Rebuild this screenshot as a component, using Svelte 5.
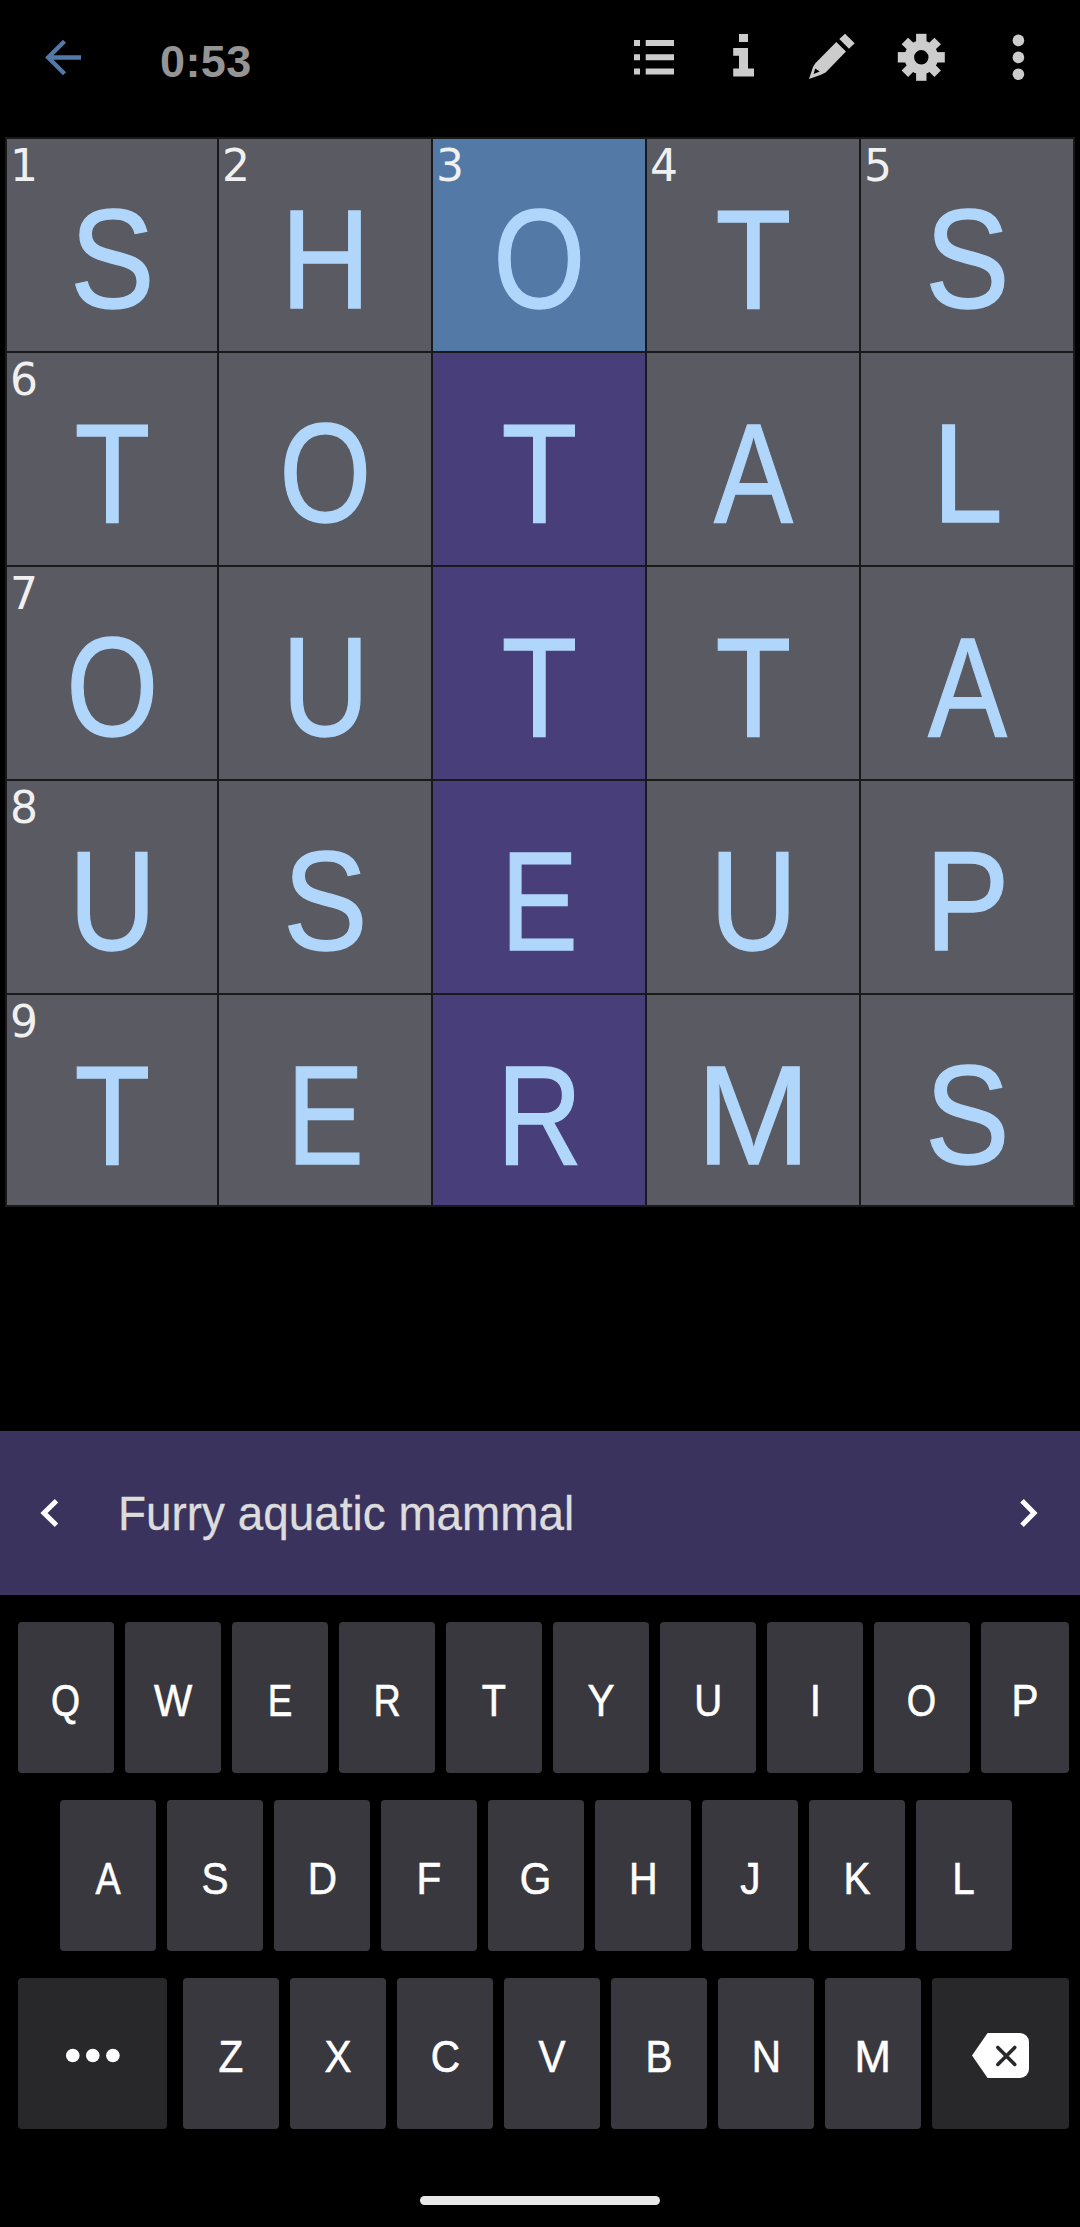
<script>
  const rows = ['SHOTS', 'TOTAL', 'OUTTA', 'USEUP', 'TERMS'];
  const numbers = { '0-0': 1, '0-1': 2, '0-2': 3, '0-3': 4, '0-4': 5, '1-0': 6, '2-0': 7, '3-0': 8, '4-0': 9 };
  const active = { row: 0, col: 2 };
  // Horizontal proportion of each capital
  const widths = { O: 0.84, Q: 0.83, U: 0.86, E: 0.82, R: 0.84, A: 0.84, T: 0.88, H: 0.88, M: 0.97 };
  const proportion = (letter) => widths[letter] ?? 0.9;
</script>

<main class="screen">
  <header class="bar">
    <button class="plain back" aria-label="Back">
      <svg width="37" height="37" viewBox="0 0 37 37"><path d="M36 18.5H3M19.5 2.2 3.2 18.5l16.3 16.3" fill="none" stroke="#5379a7" stroke-width="4.4" /></svg>
    </button>
    <span class="timer">0:53</span>
    <nav class="tools">
      <button class="plain" aria-label="Clues">
        <svg width="49" height="49" viewBox="0 0 49 49"><path d="M4 7h6v6H4zM4 21.3h6v6H4zM4 35.5h6v6H4zM15.7 7H44v6H15.7zM15.7 21.3H44v6H15.7zM15.7 35.5H44v6H15.7z" /></svg>
      </button>
      <button class="plain" aria-label="Info">
        <svg width="49" height="49" viewBox="0 0 49 49"><path d="M20 1h9v8h-9zM14.2 15H29v20.4h6v8H14.2v-8H20V22.7h-5.8z" /></svg>
      </button>
      <button class="plain" aria-label="Pencil">
        <svg width="49" height="49" viewBox="0 0 49 49"><path fill-rule="evenodd" d="M37 .7 46.7 10.3 41 15.7 31.3 6zM28.3 9 38 18.5 17.6 39.4 13 41.8 1 46 5 34 7.3 30.3zM7.2 35.4 5.6 40.9 11.7 38.5z" /></svg>
      </button>
      <button class="plain" aria-label="Settings">
        <svg width="49" height="49" viewBox="0 0 49 49">
          <g transform="translate(24.3 24.3)">
            <circle r="12" fill="none" stroke="#ccc" stroke-width="9.6" />
            {#each [0, 1, 2, 3, 4, 5, 6, 7] as tooth}
              <rect x={tooth % 2 ? -4.6 : -5.2} y={tooth % 2 ? -23.2 : -23.5} width={tooth % 2 ? 9.2 : 10.4} height="9.5" transform={`rotate(${tooth * 45})`} />
            {/each}
          </g>
        </svg>
      </button>
      <button class="plain" aria-label="More">
        <svg width="49" height="49" viewBox="0 0 49 49"><circle cx="24.4" cy="7.4" r="5.8" /><circle cx="24.4" cy="24.4" r="5.8" /><circle cx="24.4" cy="41.2" r="5.8" /></svg>
      </button>
    </nav>
  </header>

  <section class="board">
    {#each rows as row, r}
      {#each row.split('') as letter, c}
        <div class="cell" class:word={c === active.col} class:focus={r === active.row && c === active.col}>
          {#if numbers[`${r}-${c}`]}<span class="num">{numbers[`${r}-${c}`]}</span>{/if}
          <span class="letter" style:--w={proportion(letter)}>{letter}</span>
        </div>
      {/each}
    {/each}
  </section>

  <section class="clue">
    <button class="plain" aria-label="Previous clue">
      <svg width="19" height="30" viewBox="0 0 19 30"><path d="M16.5 2.8 4 15l12.5 12.2" fill="none" stroke="#fff" stroke-width="5" /></svg>
    </button>
    <p class="hint"><span>Furry aquatic mammal</span></p>
    <button class="plain" aria-label="Next clue">
      <svg width="19" height="30" viewBox="0 0 19 30"><path d="M3 2.8 15 15 3 27.2" fill="none" stroke="#fff" stroke-width="5" /></svg>
    </button>
  </section>

  <section class="keyboard">
    <div class="keys">
      {#each 'QWERTYUIOP'.split('') as key}<button class="key" class:last={key === 'P'}><span style:--w={proportion(key)}>{key}</span></button>{/each}
    </div>
    <div class="keys middle">
      {#each 'ASDFGHJKL'.split('') as key}<button class="key"><span style:--w={proportion(key)}>{key}</span></button>{/each}
    </div>
    <div class="keys">
      <button class="key special more" aria-label="More keys">
        <svg width="56" height="16" viewBox="0 0 56 16"><circle cx="7.8" cy="7.5" r="6.8" /><circle cx="27.8" cy="7.5" r="6.8" /><circle cx="47.9" cy="7.5" r="6.8" /></svg>
      </button>
      {#each 'ZXCVBNM'.split('') as key}<button class="key"><span style:--w={proportion(key)}>{key}</span></button>{/each}
      <button class="key special delete" aria-label="Delete">
        <svg width="57" height="45" viewBox="0 0 57 45"><path d="M0 22.5 15.6 0H48a9 9 0 0 1 9 9v27a9 9 0 0 1-9 9H15.6z" /><path d="m25.8 14.4 17 17m0-17-17 17" stroke="#28282a" stroke-width="3.6" stroke-linecap="round" /></svg>
      </button>
    </div>
  </section>

  <div class="home"></div>
</main>

<style>
  :global(body) { margin: 0; background: #000; }
  .screen {
    display: flex;
    flex-direction: column;
    width: 1080px;
    height: 2227px;
    overflow: hidden;
    background: #000;
    font-family: 'Liberation Sans', Arial, sans-serif;
  }
  svg { display: block; }
  button { border: 0; margin: 0; padding: 0; font: inherit; color: inherit; }
  .plain { display: flex; align-items: center; justify-content: center; background: none; }

  .bar { display: flex; align-items: center; height: 115px; margin-bottom: 22px; box-sizing: border-box; padding: 0 9px 0 45px; }
  .back { width: 37px; }
  .timer {
    margin-left: 78px;
    padding-top: 9px;
    color: #959595;
    font-size: 45px;
    font-weight: 700;
    line-height: 50px;
    letter-spacing: 0.4px;
  }
  .tools { display: grid; grid-template-columns: repeat(4, 89px) 105px; margin-left: auto; fill: #ccc; }

  .board {
    display: grid;
    grid-template-columns: 210px repeat(4, 212px);
    grid-template-rows: repeat(4, 212px) 210px;
    gap: 2px;
    width: 1066px;
    padding: 2px;
    margin-left: 5px;
    background: #19191b;
  }
  .cell { position: relative; min-width: 0; min-height: 0; background: #5a5a62; text-align: center; }
  .word { background: #483e79; }
  .focus { background: #5379a6; }
  .num {
    position: absolute;
    left: 3px;
    top: 0;
    color: #f0f0f0;
    font: 44px/54px 'DejaVu Sans', sans-serif;
  }
  .letter {
    display: block;
    height: 200px;
    padding-left: 1px;
    color: #b0d7fb;
    font-size: 141px;
    line-height: 241px;
    transform: scaleX(var(--w));
    -webkit-text-stroke: 1.3px #b0d7fb;
  }

  .clue {
    display: flex;
    align-items: center;
    height: 164px;
    margin-top: 224px;
    box-sizing: border-box;
    padding: 0 42px 0 40px;
    background: #3a335d;
  }
  .hint { flex: 1; margin: 0 0 0 59px; color: #dcdcdc; font-size: 49px; line-height: 60px; }
  .hint span { display: inline-block; transform: scaleX(0.936); transform-origin: left; -webkit-text-stroke: 0.3px #dcdcdc; }

  .keyboard { display: flex; flex-direction: column; gap: 27px; padding: 27px 11px 0 18px; }
  .keys { display: flex; gap: 11px; }
  .middle { padding-left: 42px; }
  .key {
    display: flex;
    justify-content: center;
    width: 96px;
    height: 151px;
    border-radius: 4px;
    background: #3a383f;
    color: #fff;
    font-size: 45px;
    line-height: 157px;
  }
  .key span { transform: scaleX(var(--w)); -webkit-text-stroke: 0.6px #fff; }
  .last { width: 88px; }
  .special { align-items: center; box-sizing: border-box; padding-top: 4px; background: #28282a; fill: #fff; }
  .more { width: 149px; margin-right: 5px; }
  .delete { width: 137px; }
  .home { width: 240px; height: 9px; margin: 67px auto 0; border-radius: 5px; background: #e8e8e8; }
</style>
